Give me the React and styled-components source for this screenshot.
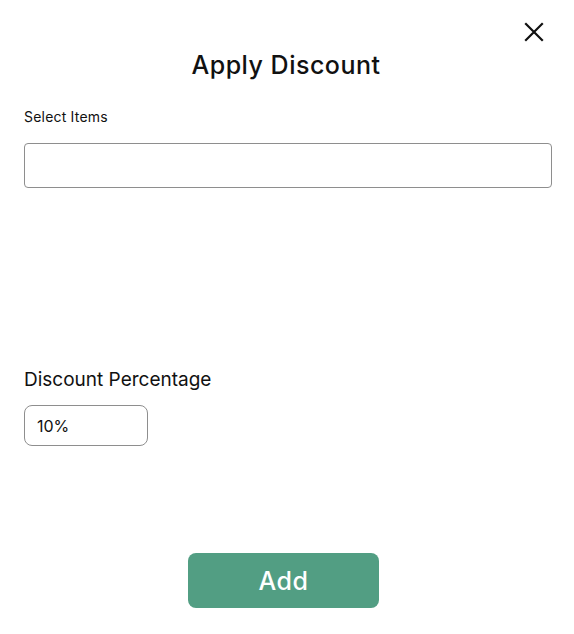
import React from "react";
import styled, { createGlobalStyle } from "styled-components";

const Global = createGlobalStyle`
  html, body { margin: 0; padding: 0; background: #ffffff; }
  body { font-family: Inter, "Noto Sans", sans-serif; color: #111111; }
  * { box-sizing: border-box; }
`;

const Modal = styled.div`
  width: 574px;
  height: 634px;
  padding: 0 22px 0 24px;
  display: flex;
  flex-direction: column;
  background: #fff;
`;

const TopBar = styled.div`
  display: flex;
  justify-content: flex-end;
  padding-top: 18px;
  padding-right: 4px;
`;

const CloseButton = styled.button`
  width: 28px;
  height: 28px;
  border: none;
  background: transparent;
  padding: 0;
  display: flex;
  align-items: center;
  justify-content: center;
  cursor: pointer;
  color: #111;
`;

const Title = styled.h2`
  margin: 4px 0 0;
  text-align: center;
  font-size: 25px;
  line-height: 30px;
  font-weight: 500;
  letter-spacing: 0.5px;
  color: #111;
  padding-right: 4px;
`;

const Label = styled.label`
  display: block;
  font-size: ${(p) => p.$size}px;
  line-height: ${(p) => p.$lh}px;
  font-weight: 400;
  color: #111;
  margin-top: ${(p) => p.$mt}px;
  letter-spacing: ${(p) => p.$ls || 0}px;
`;

const Field = styled.input`
  display: block;
  width: ${(p) => p.$w};
  height: ${(p) => p.$h}px;
  margin-top: ${(p) => p.$mt}px;
  border: 1px solid #8e8e8e;
  border-radius: ${(p) => p.$r}px;
  padding: 0 12px;
  font-family: inherit;
  font-size: 16px;
  color: #111;
  background: #fff;
  outline: none;
`;

const Footer = styled.div`
  display: flex;
  justify-content: center;
  margin-top: 107px;
  padding-right: 9px;
`;

const AddButton = styled.button`
  width: 191px;
  height: 55px;
  border: none;
  border-radius: 8px;
  background: #529e83;
  color: #fff;
  font-family: inherit;
  font-size: 25px;
  font-weight: 500;
  letter-spacing: 0.5px;
  cursor: pointer;
`;

export default function App() {
  return (
    <>
      <Global />
      <Modal>
        <TopBar>
          <CloseButton aria-label="Close">
            <svg width="20" height="20" viewBox="0 0 20 20" fill="none" stroke="#111" strokeWidth="2.2" strokeLinecap="square">
              <path d="M2 2 L18 18 M18 2 L2 18" />
            </svg>
          </CloseButton>
        </TopBar>
        <Title>Apply Discount</Title>
        <Label $size={14} $lh={20} $mt={27} $ls={0.2}>Select Items</Label>
        <Field $w="100%" $h={45} $r={4} $mt={16} />
        <Label $size={19} $lh={24} $mt={180}>Discount Percentage</Label>
        <Field $w="124px" $h={41} $r={8} $mt={13} defaultValue="10%" />
        <Footer>
          <AddButton>Add</AddButton>
        </Footer>
      </Modal>
    </>
  );
}
